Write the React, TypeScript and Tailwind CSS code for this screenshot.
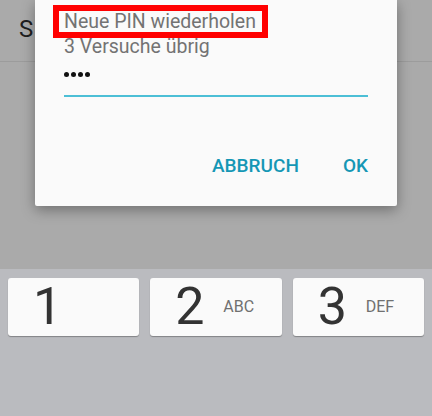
export default function App() {
  const keys = [
    { digit: '1', letters: '' },
    { digit: '2', letters: 'ABC' },
    { digit: '3', letters: 'DEF' },
  ];

  return (
    <div className="relative w-[432px] h-[416px] overflow-hidden bg-[#aaaaaa] font-['Roboto',sans-serif]">
      {/* gedimmter Hintergrund */}
      <div className="h-[269px]">
        <div className="h-[62px] border-b border-[#9c9c9c] pl-[19px] pt-[17px]">
          <span className="text-[24px] leading-[24px] text-[#1f1f1f]">S</span>
        </div>
      </div>

      {/* Tastatur */}
      <div className="h-[147px] bg-[#babbbf] pt-[9px] px-[8px]">
        <div className="grid grid-cols-3 gap-[11px]">
          {keys.map((k) => (
            <div
              key={k.digit}
              className="h-[58px] flex items-center pl-[25px] rounded-[3px] bg-[#fafafa] shadow-[0_1px_1px_rgba(0,0,0,0.3)]"
            >
              <span className="w-[29px] text-center text-[52px] leading-[52px] text-[#333333]">
                {k.digit}
              </span>
              {k.letters && (
                <span className="ml-[19px] text-[16px] leading-[16px] text-[#707070]">
                  {k.letters}
                </span>
              )}
            </div>
          ))}
        </div>
      </div>

      {/* Dialog */}
      <div className="absolute left-[35px] top-0 w-[362px] h-[206px] rounded-b-[2px] bg-[#fafafa] shadow-[0_4px_14px_rgba(0,0,0,0.35)] px-[29px] pt-[9px]">
        <p className="text-[19.5px] leading-[25px] text-[#737373]">Neue PIN wiederholen</p>
        <p className="text-[19.5px] leading-[25px] text-[#737373]">3 Versuche übrig</p>
        <div className="h-[30px] flex items-center gap-[2px]">
          {[0, 1, 2, 3].map((i) => (
            <span key={i} className="w-[5px] h-[5px] rounded-full bg-[#111111]" />
          ))}
        </div>
        <div className="mt-[6px] h-[2px] bg-[#4cbfd6]" />
        <div className="mt-[59px] flex justify-end gap-[44px]">
          <span className="text-[19px] leading-[20px] font-medium text-[#1597b5]">ABBRUCH</span>
          <span className="text-[19px] leading-[20px] font-medium text-[#1597b5]">OK</span>
        </div>

        {/* Markierung */}
        <div className="absolute left-[18px] top-[5px] w-[215px] h-[33px] border-[6px] border-[#ff0000]" />
      </div>
    </div>
  );
}
